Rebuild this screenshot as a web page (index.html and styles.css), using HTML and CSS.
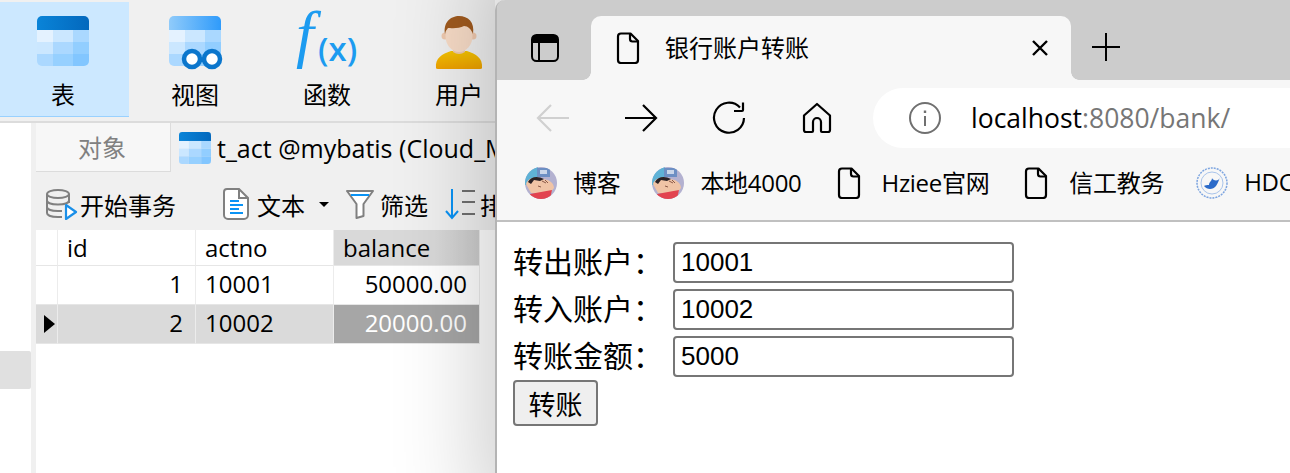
FILE: index.html
```html
<!DOCTYPE html>
<html lang="zh-CN">
<head>
  <meta charset="UTF-8">
  <meta name="viewport" content="width=device-width, initial-scale=1.0">
  <title>银行账户转账</title>
  <link rel="stylesheet" href="styles.css">
</head>
<body>
  <svg class="defs" width="0" height="0">
    <defs>
      <linearGradient id="head-dark" x1="0" x2="1" y1="0" y2="0"><stop offset="0" stop-color="#0a84d8"/><stop offset="1" stop-color="#0368bd"/></linearGradient>
      <linearGradient id="head-light" x1="0" x2="1" y1="0" y2="0"><stop offset="0" stop-color="#90cbfa"/><stop offset="1" stop-color="#2f9bfb"/></linearGradient>
      <linearGradient id="shirt" x1="0" x2="0" y1="0" y2="1"><stop offset="0" stop-color="#f5c400"/><stop offset="1" stop-color="#eea000"/></linearGradient>
      <clipPath id="round-table"><rect width="52" height="50" rx="5"/></clipPath>
      <clipPath id="round-face"><circle cx="16" cy="16" r="16"/></clipPath>
      <g id="table-cells" clip-path="url(#round-table)">
        <rect y="14" width="16" height="12" fill="#e4f2ff"/><rect x="16" y="14" width="20" height="12" fill="#cbe7ff"/><rect x="36" y="14" width="16" height="12" fill="#aad8ff"/>
        <rect y="26" width="16" height="12" fill="#cbe7ff"/><rect x="16" y="26" width="20" height="12" fill="#abd8ff"/><rect x="36" y="26" width="16" height="12" fill="#92ceff"/>
        <rect y="38" width="16" height="12" fill="#abd8ff"/><rect x="16" y="38" width="20" height="12" fill="#96d0ff"/><rect x="36" y="38" width="16" height="12" fill="#82c6ff"/>
      </g>
      <g id="doc-page" fill="none" stroke="#000" stroke-width="2.2" stroke-linejoin="round">
        <path d="M8 1.500h9.500l7.500 7.500v19a3 3 0 0 1-3 3H8a3 3 0 0 1-3-3V4.500a3 3 0 0 1 3-3z"/>
        <path d="M17 1.500V7a2.500 2.500 0 0 0 2.500 2.500H25"/>
      </g>
      <g id="shin-face" clip-path="url(#round-face)">
        <rect width="32" height="32" fill="#b3b1d0"/>
        <rect width="13" height="18" fill="#5fb2d6"/>
        <rect x="12" y="1" width="13" height="9" fill="#6d8fc4"/>
        <rect x="15" y="3" width="7" height="4" fill="#c9d6ea"/>
        <path d="M1 17 C3 10 12 9 17 12 C24 12 29 16 29 21 L25 26 L6 26 Z" fill="#f0c4a6"/>
        <path d="M3 15 C6 9 13 9 19 12 L15 14 L9 13 L6 17 Z" fill="#2a2226"/>
        <path d="M17 14l4 2M20 13l3 3M13 19l3 1" stroke="#8b5a48" stroke-width="1" fill="none"/>
        <path d="M5 27 L27 23 L25 32 L7 32 Z" fill="#e2434f"/>
      </g>
    </defs>
  </svg>

  <div class="desktop">
    <section class="navicat">
      <div class="ribbon">
        <div class="ribbon-item active">
          <svg width="52" height="50" viewBox="0 0 52 50"><use href="#table-cells"/><g clip-path="url(#round-table)"><rect width="52" height="14" fill="url(#head-dark)"/></g></svg>
          <span>表</span>
        </div>
        <div class="ribbon-item">
          <svg width="56" height="56" viewBox="0 0 56 56"><use href="#table-cells"/><g clip-path="url(#round-table)"><rect width="52" height="14" fill="url(#head-light)"/></g>
            <path d="M28 44h10" stroke="#0b76cc" stroke-width="4"/>
            <circle cx="23" cy="43" r="8" fill="#fff" stroke="#0b76cc" stroke-width="4.500"/><circle cx="43" cy="43" r="8" fill="#fff" stroke="#0b76cc" stroke-width="4.500"/></svg>
          <span>视图</span>
        </div>
        <div class="ribbon-item">
          <svg class="fx" width="68" height="56" viewBox="0 0 68 56"><text class="fx-f" x="3" y="39">f</text><text class="fx-x" x="25" y="45">(x)</text></svg>
          <span>函数</span>
        </div>
        <div class="ribbon-item">
          <svg width="48" height="54" viewBox="0 0 48 54">
            <path d="M1 52 C0 42 7 38 16 35 H32 C41 38 48 42 47 52 Q47 53 45 53 H3 Q1 53 1 52z" fill="url(#shirt)"/>
            <path d="M18 30h12v6q-6 4-12 0z" fill="#eccbb0"/>
            <circle cx="10" cy="20" r="3.500" fill="#efc9ae"/><circle cx="38" cy="20" r="3.500" fill="#efc9ae"/>
            <ellipse cx="24" cy="20" rx="13.500" ry="16" fill="#f8dcc7"/>
            <path d="M10 18 C8 6 16 0 24 0 C33 0 40 6 38 18 C36 13 33 10 29 10 C24 13 15 12 13 12 Q11 14 10 18z" fill="#a05a1e"/>
          </svg>
          <span>用户</span>
        </div>
      </div>

      <div class="workspace">
        <div class="sidebar"><div class="side-selected"></div></div>
        <div class="main">
          <div class="tabs">
            <div class="tab-objects">对象</div>
            <div class="tab-table">
              <svg class="tab-icon" width="32" height="32" viewBox="0 0 52 50" preserveAspectRatio="none"><use href="#table-cells"/><g clip-path="url(#round-table)"><rect width="52" height="14" fill="url(#head-dark)"/></g></svg>
              <span>t_act @mybatis (Cloud_MySQL)</span>
            </div>
          </div>

          <div class="actions">
            <div class="action begin">
              <svg width="32" height="32" viewBox="0 0 32 32" fill="none">
                <ellipse cx="12" cy="6" rx="11" ry="4" stroke="#808080" stroke-width="2"/>
                <path d="M1 6v19c0 2.500 5 4 11 4h4M23 6v9M1 12.500c0 2.500 5 4 11 4s11-1.500 11-4M1 19c0 2.500 5 4 11 4h4" stroke="#808080" stroke-width="2"/>
                <path d="M20 17l10 7-10 7z" fill="#fff" stroke="#1a8fe8" stroke-width="2.200" stroke-linejoin="round"/>
              </svg>
              <span>开始事务</span>
            </div>
            <div class="action-divider"></div>
            <div class="action doc-type">
              <svg width="26" height="32" viewBox="0 0 26 32" fill="none">
                <path d="M4 1h12l9 9v17a4 4 0 0 1-4 4H5a4 4 0 0 1-4-4V4a3 3 0 0 1 3-3z" fill="#fff" stroke="#808080" stroke-width="2"/>
                <path d="M16 1v9h9" stroke="#808080" stroke-width="2"/>
                <path d="M7 13h9M7 17h13M7 21h9M7 25h13" stroke="#0a93f5" stroke-width="2"/>
              </svg>
              <span>文本</span>
              <i class="caret"></i>
            </div>
            <div class="action filter">
              <svg width="28" height="30" viewBox="0 0 28 30" fill="none">
                <path d="M1 2h26l-9.500 13v12l-7 2V15z" fill="#fff" stroke="#808080" stroke-width="2" stroke-linejoin="round"/>
                <path d="M5 6h18" stroke="#0a93f5" stroke-width="2"/>
              </svg>
              <span>筛选</span>
            </div>
            <div class="action sort">
              <svg width="32" height="32" viewBox="0 0 32 32" fill="none">
                <path d="M7 1v29M1 23l6 7 6-7" stroke="#0a93f5" stroke-width="2"/>
                <path d="M17 3h13M17 14h13M17 26h13" stroke="#707070" stroke-width="2"/>
              </svg>
              <span>排序</span>
            </div>
          </div>

          <div class="grid">
            <div class="cell mark head"></div>
            <div class="cell head">id</div>
            <div class="cell head">actno</div>
            <div class="cell head head-sel">balance</div>

            <div class="cell mark"></div>
            <div class="cell num">1</div>
            <div class="cell">10001</div>
            <div class="cell num">50000.00</div>

            <div class="cell mark row-sel"><i class="pointer"></i></div>
            <div class="cell num row-sel">2</div>
            <div class="cell row-sel">10002</div>
            <div class="cell num cell-sel">20000.00</div>
          </div>
        </div>
      </div>
    </section>

    <section class="browser">
      <div class="tabstrip">
        <svg class="sidebar-btn" width="28" height="28" viewBox="0 0 28 28" fill="none">
          <rect x="1" y="1" width="26" height="26" rx="4.500" stroke="#000" stroke-width="2"/>
          <path d="M1 6a5 5 0 0 1 5-5h16a5 5 0 0 1 5 5v3H1z" fill="#000"/>
          <path d="M8 9v18" stroke="#000" stroke-width="2"/>
        </svg>
        <div class="btab">
          <svg class="doc" width="32" height="32" viewBox="0 0 32 32"><use href="#doc-page"/></svg>
          <span class="btab-title">银行账户转账</span>
          <svg class="btab-close" width="18" height="18" viewBox="0 0 18 18"><path d="M2 2l14 14M16 2L2 16" stroke="#000" stroke-width="2.400"/></svg>
        </div>
        <svg class="newtab" width="28" height="28" viewBox="0 0 28 28"><path d="M14 0v28M0 14h28" stroke="#000" stroke-width="2"/></svg>
      </div>

      <div class="navbar">
        <svg class="nav-btn" width="34" height="30" viewBox="0 0 34 30" fill="none" stroke="#d0d0d0" stroke-width="2.200"><path d="M33 15H2M15 2L2 15l13 13"/></svg>
        <svg class="nav-btn" width="34" height="30" viewBox="0 0 34 30" fill="none" stroke="#000" stroke-width="2.200"><path d="M1 15h31M19 2l13 13-13 13"/></svg>
        <svg class="nav-btn" width="34" height="34" viewBox="0 0 34 34" fill="none" stroke="#000" stroke-width="2.200"><path d="M28 6.500A15 15 0 1 0 32 17"/><path d="M31 1.500v7.500a1 1 0 0 1-1 1H22"/></svg>
        <svg class="nav-btn home" width="30" height="32" viewBox="0 0 30 32" fill="none" stroke="#000" stroke-width="2.200" stroke-linejoin="round"><path d="M15 2L2 13.500V28a2 2 0 0 0 2 2h6a1 1 0 0 0 1-1v-9a4 4 0 0 1 8 0v9a1 1 0 0 0 1 1h6a2 2 0 0 0 2-2V13.500z"/></svg>
        <div class="omnibox">
          <svg width="32" height="32" viewBox="0 0 32 32" fill="none" stroke="#707070"><circle cx="16" cy="16" r="15" stroke-width="2"/><path d="M16 14v10" stroke-width="2"/><path d="M16 8.500v2.500" stroke-width="2.400"/></svg>
          <span class="url">localhost<span class="url-rest">:8080/bank/</span></span>
        </div>
      </div>

      <div class="bookmarks">
        <div class="mark-item"><svg width="32" height="32" viewBox="0 0 32 32"><use href="#shin-face"/></svg><span>博客</span></div>
        <div class="mark-item"><svg width="32" height="32" viewBox="0 0 32 32"><use href="#shin-face"/></svg><span>本地4000</span></div>
        <div class="mark-item"><svg width="32" height="32" viewBox="0 0 32 32"><use href="#doc-page"/></svg><span>Hziee官网</span></div>
        <div class="mark-item"><svg width="32" height="32" viewBox="0 0 32 32"><use href="#doc-page"/></svg><span>信工教务</span></div>
        <div class="mark-item"><svg width="32" height="32" viewBox="0 0 32 32" fill="none"><circle cx="16" cy="16" r="15" stroke="#7da5e0" stroke-width="1.500" stroke-dasharray="2 1"/><circle cx="16" cy="16" r="11" stroke="#a9c4ea" stroke-width="1"/><path d="M8 19c3 4 9 4 12 0 2-3 3-6 4-9-1 5-7 4-8 1 0 3-3 4-3 7-2 0-4 0-5 1z" fill="#2c6bc9"/></svg><span>HDC</span></div>
      </div>

      <form class="transfer">
        <div class="field"><label>转出账户：</label><input type="text" value="10001"></div>
        <div class="field"><label>转入账户：</label><input type="text" value="10002"></div>
        <div class="field"><label>转账金额：</label><input type="text" value="5000"></div>
        <button type="button">转账</button>
      </form>
    </section>
  </div>
</body>
</html>
```

FILE: styles.css
```css
* {
  box-sizing: border-box;
}

html, body {
  margin: 0;
  height: 100%;
  overflow: hidden;
}

body {
  font-family: "Open Sans", "Noto Sans CJK SC", sans-serif;
  color: #000;
  background: #fff;
}

.defs {
  display: block;
  height: 0;
}

.desktop {
  display: flex;
  width: 1290px;
  height: 473px;
  overflow: hidden;
}

/* left window */
.navicat {
  width: 495px;
  flex: none;
  display: flex;
  flex-direction: column;
  overflow: hidden;
  background: #fff;
}

.ribbon {
  display: flex;
  height: 123px;
  flex: none;
  padding: 2px 0 0;
  background: #f0f0f0;
  border-bottom: 2px solid #dcdcdc;
}

.ribbon-item {
  position: relative;
  width: 132px;
  height: 115px;
  flex: none;
  display: flex;
  flex-direction: column;
  align-items: center;
  font-size: 24px;
  line-height: 30px;
}

.ribbon-item svg {
  position: absolute;
  top: 14px;
}

.ribbon-item span {
  margin-top: 78px;
}

.ribbon-item.active {
  width: 129px;
  padding-right: 3px;
  background: #cce8ff;
  border-bottom: 1px solid #99d1ff;
}

.ribbon-item:nth-child(2) svg {
  left: 40px;
}

.fx {
  overflow: visible;
}

.fx-f {
  font: italic 400 64px "Liberation Serif", serif;
  fill: #1c9bf0;
}

.fx-x {
  font: 600 33px "Open Sans", sans-serif;
  fill: #1c9bf0;
}

.workspace {
  flex: 1;
  display: flex;
  min-height: 0;
}

.sidebar {
  width: 36px;
  flex: none;
  padding-top: 228px;
  background: #fff;
  border-right: 5px solid #f0f0f0;
}

.side-selected {
  height: 38px;
  background: #e0e0e0;
  border-radius: 0 2px 2px 0;
}

.main {
  flex: 1;
  min-width: 0;
  display: flex;
  flex-direction: column;
  background: #fff;
}

.tabs {
  display: flex;
  height: 49px;
  flex: none;
  background: #f0f0f0;
}

.tab-objects {
  width: 135px;
  flex: none;
  display: flex;
  align-items: center;
  justify-content: center;
  padding: 0 2px 2px 0;
  font-size: 24px;
  color: #808080;
  background: #f7f7f7;
  border-right: 1px solid #dcdcdc;
  border-bottom: 1px solid #dcdcdc;
}

.tab-table {
  display: flex;
  align-items: center;
  gap: 6px;
  padding-left: 8px;
  font-size: 25px;
  white-space: nowrap;
}

.tab-icon {
  flex: none;
}

.actions {
  display: flex;
  align-items: center;
  height: 58px;
  flex: none;
  padding: 6px 0 0 10px;
  background: #f0f0f0;
  font-size: 24px;
  white-space: nowrap;
}

.action {
  display: flex;
  align-items: center;
  gap: 2px;
}

.action-divider {
  width: 1px;
  height: 46px;
  margin: 0 24px 0 23px;
  background: #d4d4d4;
}

.doc-type {
  gap: 8px;
}

.caret {
  width: 0;
  height: 0;
  margin-left: 6px;
  border: 5px solid transparent;
  border-top: 5px solid #000;
  border-bottom: 0;
}

.filter {
  margin-left: 17px;
  gap: 6px;
}

.sort {
  margin-left: 17px;
  gap: 3px;
}

.grid {
  display: grid;
  grid-template-columns: 22px 138px 138px 146px;
  grid-template-rows: 36px 39px 39px;
  width: 444px;
  font-size: 24px;
}

.cell {
  display: flex;
  align-items: center;
  padding: 0 9px 3px;
  border-right: 1px solid #ececec;
  border-bottom: 1px solid #e6e6e6;
  background: #fff;
}

.head {
  padding-bottom: 0;
}

.mark {
  padding: 0;
}

.num {
  justify-content: flex-end;
  padding-right: 12px;
}

.head-sel {
  background: linear-gradient(90deg, #d9d9d9 70%, #cdcdcd);
}

.row-sel {
  background: #dadada;
}

.cell-sel {
  background: #a6a6a6;
  color: #fff;
}

.pointer {
  margin-left: 8px;
  border-left: 11px solid #000;
  border-top: 9px solid transparent;
  border-bottom: 9px solid transparent;
}

/* browser window over it */
.browser {
  position: relative;
  z-index: 1;
  flex: 1;
  min-width: 0;
  height: 473px;
  display: flex;
  flex-direction: column;
  background: #fff;
  border-left: 2px solid #b4b4b4;
  border-top-left-radius: 10px;
  box-shadow: 35px 0 90px 50px rgba(0, 0, 0, 0.2);
}

.tabstrip {
  display: flex;
  align-items: flex-start;
  height: 80px;
  flex: none;
  padding: 16px 0 0 34px;
  background: #cccccc;
  border-top-left-radius: 8px;
}

.sidebar-btn {
  margin-top: 18px;
  flex: none;
}

.btab {
  position: relative;
  display: flex;
  align-items: center;
  width: 480px;
  height: 64px;
  flex: none;
  margin-left: 32px;
  padding: 0 22px;
  background: #f7f7f7;
  border-radius: 10px 10px 0 0;
  font-family: "Noto Sans CJK SC", sans-serif;
  font-size: 24px;
}

/* small concave corners at the foot of the tab */
.btab::before,
.btab::after {
  content: "";
  position: absolute;
  bottom: 0;
  width: 8px;
  height: 8px;
}

.btab::before {
  left: -8px;
  background: radial-gradient(circle at 0 0, #cccccc 7.500px, #f7f7f7 8px);
}

.btab::after {
  right: -8px;
  background: radial-gradient(circle at 100% 0, #cccccc 7.500px, #f7f7f7 8px);
}

.btab .doc {
  flex: none;
}

.btab-title {
  flex: 1;
  margin-left: 20px;
  padding-bottom: 4px;
}

.newtab {
  margin: 17px 0 0 21px;
  flex: none;
}

.navbar {
  display: flex;
  align-items: center;
  height: 76px;
  flex: none;
  padding-left: 39px;
  background: #f7f7f7;
}

.nav-btn {
  flex: none;
  margin-right: 54px;
}

.nav-btn.home {
  margin-left: 2px;
  margin-right: 41px;
}

.omnibox {
  display: flex;
  align-items: center;
  flex: none;
  width: 500px;
  height: 60px;
  padding-left: 36px;
  border-radius: 30px;
  background: #fff;
  font-size: 26.500px;
}

.url {
  margin-left: 30px;
}

.url-rest {
  color: #767676;
}

.bookmarks {
  display: flex;
  align-items: center;
  gap: 32px;
  height: 66px;
  flex: none;
  padding: 0 0 10px 28px;
  background: #f7f7f7;
  border-bottom: 2px solid #c0c0c0;
  font-size: 24px;
  letter-spacing: -0.3px;
  white-space: nowrap;
}

.mark-item {
  display: flex;
  align-items: center;
  gap: 16px;
  flex: none;
}

.mark-item span {
  padding-bottom: 3px;
}

.transfer {
  display: flex;
  flex-direction: column;
  align-items: flex-start;
  gap: 6px;
  padding: 20px 0 0 16px;
  font-family: "Liberation Sans", "Noto Sans CJK SC", sans-serif;
  font-size: 30px;
}

.field {
  display: flex;
  align-items: center;
  height: 41px;
}

.field label {
  width: 160px;
  white-space: nowrap;
  line-height: 41px;
}

.field input {
  width: 341px;
  height: 41px;
  padding: 0 6px;
  border: 2px solid #767676;
  border-radius: 4px;
  font: 26px "Liberation Sans", sans-serif;
  color: #000;
  background: #fff;
}

.transfer button {
  width: 85px;
  height: 46px;
  margin-top: -3px;
  padding: 0;
  border: 2px solid #767676;
  border-radius: 4px;
  background: #efefef;
  color: #000;
  font: 27px "Liberation Sans", "Noto Sans CJK SC", sans-serif;
}
```
